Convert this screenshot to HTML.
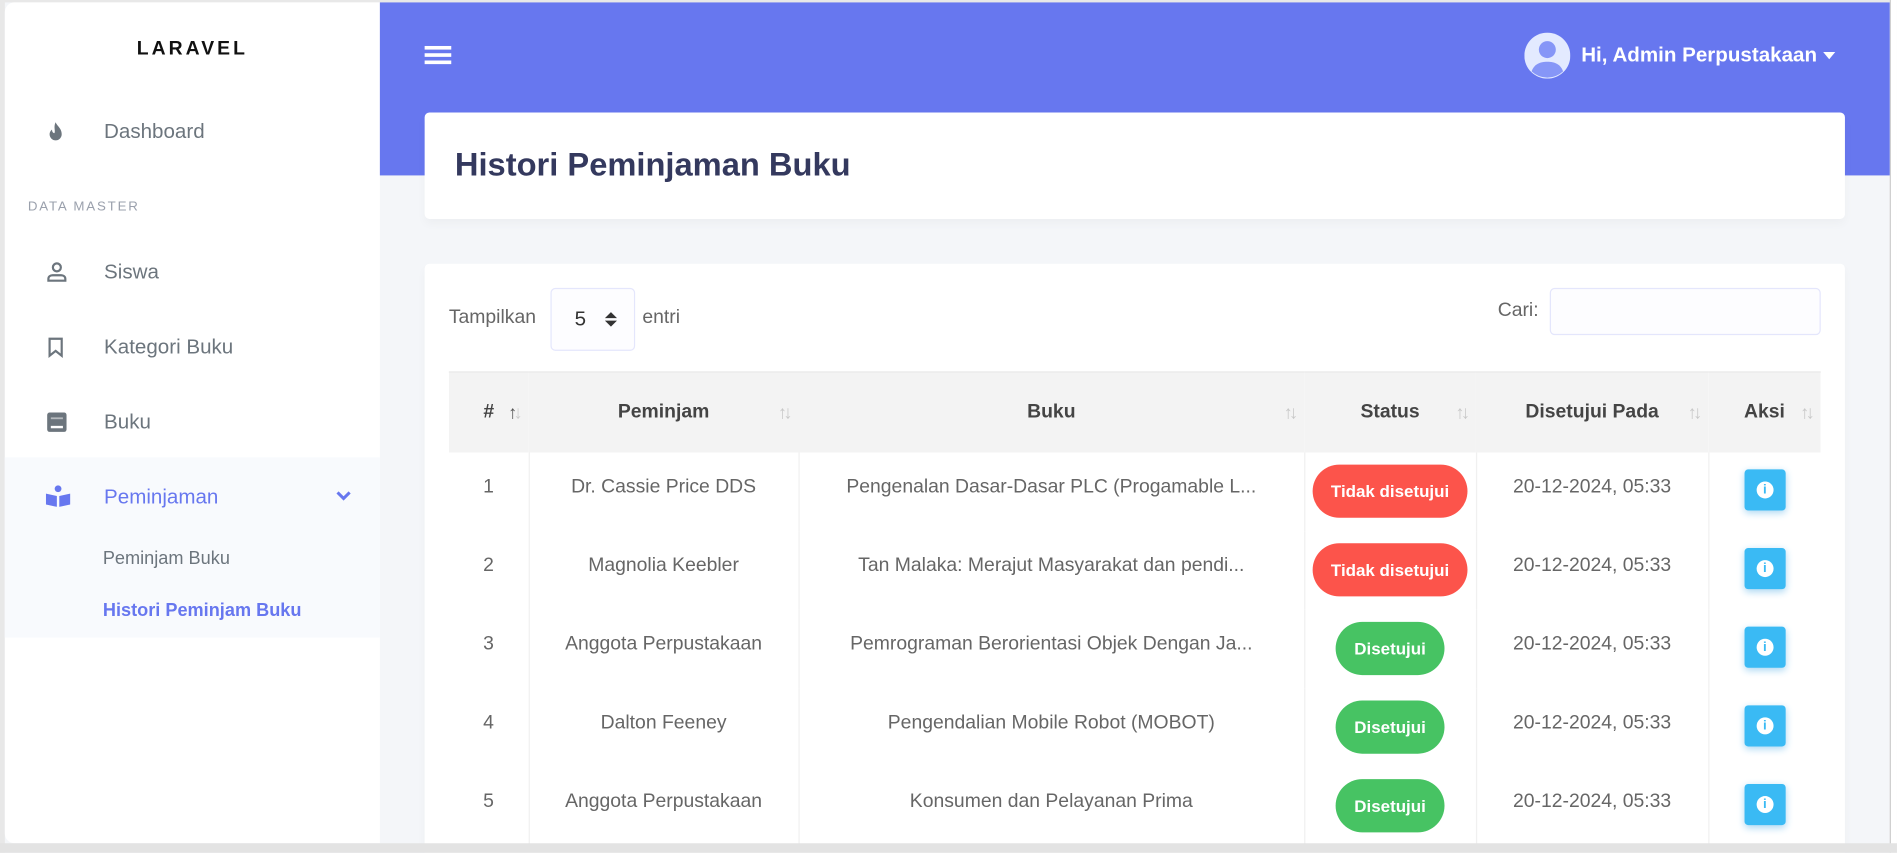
<!DOCTYPE html>
<html><head><meta charset="utf-8"><style>
*{box-sizing:border-box;margin:0;padding:0}
html,body{width:1897px;height:853px;overflow:hidden;background:#fff}
#w{position:absolute;left:0;top:0;width:1568px;height:705px;transform:scale(1.2098);transform-origin:0 0;background:#f4f6f9;font-family:"Liberation Sans",sans-serif;overflow:hidden}
.abs{position:absolute}
#sb{left:4px;top:2px;width:310px;height:695px;background:#fff;border-radius:8px 0 0 8px}
.logo{left:0;width:310px;top:30px;text-align:center;font-weight:bold;font-size:16px;letter-spacing:2.5px;color:#111}
.mi{position:absolute;left:82px;font-size:17px;color:#6c757d}
.ic{position:absolute;left:34px}
#hd{left:314px;top:2px;width:1248px;height:143px;background:#6777ef}
.card{background:#fff;border-radius:4px;box-shadow:0 4px 8px rgba(0,0,0,.03)}
table{border-collapse:collapse;table-layout:fixed;position:absolute;left:371px;top:307px;width:1134px;font-size:16px;color:#666}
th{height:66px;background:#f3f3f3;color:#444;font-weight:bold;position:relative;border-top:1px solid #e5e5e5;white-space:nowrap}
td{height:65px;text-align:center;border-left:1px solid #f0f0f0;vertical-align:middle;padding:0 4px 6px;white-space:nowrap;overflow:hidden}
td:first-child{border-left:none}
.s{position:absolute;right:8px;top:25px;color:#c8c8c8;font-size:15px;font-weight:normal;letter-spacing:-3px}
.b{display:inline-block;color:#fff;font-weight:bold;font-size:14px;height:44px;line-height:44px;border-radius:22px;padding:0 15px;position:relative;top:3px}
.r{background:#fc544b}.g{background:#47c363}
.inf{display:inline-block;width:34px;height:34px;background:#3abaf4;border-radius:3px;position:relative;top:4px;box-shadow:0 2px 6px #acd8f3}
.inf:after{content:"i";position:absolute;left:10px;top:10px;width:14px;height:14px;border-radius:50%;background:#fff;color:#3abaf4;font-size:11px;font-weight:bold;line-height:14px;text-align:center}
</style></head><body><div id="w">
<div class="abs" style="left:0;top:0;width:1568px;height:2px;background:#e8e8e8"></div>
<div class="abs" style="left:0;top:0;width:4px;height:705px;background:#e8e8e8"></div>
<div class="abs" style="left:1562px;top:0;width:6px;height:705px;background:#fff;border-left:1px solid #ccc"></div>
<div id="sb" class="abs">
 <div class="abs logo">LARAVEL</div>
 <svg class="ic" style="top:98px" width="16" height="18" viewBox="0 0 16 18"><path d="M8 1c1 3 5 5 5 10a5 5 0 0 1-10 0c0-2 1-3 2-4 0 2 1 3 2 3 1-2-1-5 1-9z" fill="#6c757d"/></svg>
 <div class="mi" style="top:97px">Dashboard</div>
 <div class="abs" style="left:19px;top:163px;font-size:11px;letter-spacing:1.5px;color:#9aa0ac">DATA MASTER</div>
 <svg class="ic" style="top:214px" width="18" height="18" viewBox="0 0 18 18" fill="none" stroke="#6c757d" stroke-width="1.8"><circle cx="9" cy="5" r="3.3"/><path d="M2 16v-1.5c0-1.8 1.5-3 3.5-3h7c2 0 3.5 1.2 3.5 3V16z"/></svg>
 <div class="mi" style="top:213px">Siswa</div>
 <svg class="ic" style="top:276px" width="16" height="18" viewBox="0 0 16 18" fill="none" stroke="#6c757d" stroke-width="1.8"><path d="M3 2h10v14l-5-4-5 4z"/></svg>
 <div class="mi" style="top:275px">Kategori Buku</div>
 <svg class="ic" style="top:338px" width="18" height="18" viewBox="0 0 18 18"><rect x="1" y="1" width="16" height="16" rx="2" fill="#6c757d"/><rect x="4" y="12" width="10" height="2" fill="#fff"/><rect x="4" y="5" width="10" height="1.5" fill="#fff" opacity=".5"/></svg>
 <div class="mi" style="top:337px">Buku</div>
 <div class="abs" style="left:0;top:376px;width:310px;height:149px;background:#f8fafd"></div>
 <svg class="ic" style="top:399px;left:33px" width="22" height="18" viewBox="0 0 22 18"><circle cx="11" cy="3" r="2.8" fill="#6777ef"/><path d="M1 7l9 2v9l-9-2zM21 7l-9 2v9l9-2z" fill="#6777ef"/></svg>
 <div class="mi" style="top:399px;color:#6777ef">Peminjaman</div>
 <svg class="abs" style="left:273px;top:403px" width="14" height="10" viewBox="0 0 14 10"><path d="M2 2l5 5 5-5" stroke="#6777ef" stroke-width="2.5" fill="none"/></svg>
 <div class="abs" style="left:81px;top:451px;font-size:15px;color:#6c757d">Peminjam Buku</div>
 <div class="abs" style="left:81px;top:494px;font-size:15px;color:#6777ef;font-weight:bold">Histori Peminjam Buku</div>
</div>
<div id="hd" class="abs"></div>
<div class="abs" style="left:351px;top:38px;width:22px;height:15px;border-top:3px solid #fff;border-bottom:3px solid #fff"><div style="margin-top:3px;height:3px;background:#fff"></div></div>
<svg class="abs" style="left:1260px;top:27px" width="38" height="38" viewBox="0 0 38 38"><circle cx="19" cy="19" r="19" fill="#e3eaff"/><circle cx="19" cy="14" r="7" fill="#8696f7"/><path d="M6 32c2-6 7-8 13-8s11 2 13 8a19 19 0 0 1-26 0z" fill="#8696f7"/></svg>
<div class="abs" style="left:1307px;top:36px;color:#fff;font-weight:bold;font-size:17px">Hi, Admin Perpustakaan</div>
<div class="abs" style="left:1507px;top:43px;border:5px solid transparent;border-top:6px solid #fff"></div>
<div class="abs card" style="left:351px;top:93px;width:1174px;height:88px"></div>
<div class="abs" style="left:376px;top:121px;font-size:27px;font-weight:bold;color:#34395e">Histori Peminjaman Buku</div>
<div class="abs card" style="left:351px;top:218px;width:1174px;height:500px"></div>
<div class="abs" style="left:371px;top:254px;font-size:16px;color:#666">Tampilkan</div>
<div class="abs" style="left:455px;top:238px;width:70px;height:52px;border:1px solid #e4e6fc;border-radius:4px;background:#fdfdff"></div>
<div class="abs" style="left:475px;top:254px;font-size:17px;color:#333">5</div>
<svg class="abs" style="left:499px;top:257px" width="12" height="14" viewBox="0 0 12 14"><path d="M6 1l5 5H1zM6 13l5-5H1z" fill="#333"/></svg>
<div class="abs" style="left:531px;top:254px;font-size:16px;color:#666">entri</div>
<div class="abs" style="left:1238px;top:248px;font-size:16px;color:#666">Cari:</div>
<div class="abs" style="left:1281px;top:238px;width:224px;height:39px;border:1px solid #e4e6fc;border-radius:4px;background:#fdfdff"></div>
<table>
<colgroup><col style="width:66px"><col style="width:223px"><col style="width:418px"><col style="width:142px"><col style="width:192px"><col style="width:93px"></colgroup>
<tr><th>#<span class="s" style="color:#555">↑<span style="color:#ccc">↓</span></span></th><th>Peminjam<span class="s">↑↓</span></th><th>Buku<span class="s">↑↓</span></th><th>Status<span class="s">↑↓</span></th><th>Disetujui Pada<span class="s">↑↓</span></th><th>Aksi<span class="s">↑↓</span></th></tr>
<tr><td>1</td><td>Dr. Cassie Price DDS</td><td>Pengenalan Dasar-Dasar PLC (Progamable L...</td><td><span class="b r">Tidak disetujui</span></td><td>20-12-2024, 05:33</td><td><span class="inf"></span></td></tr>
<tr><td>2</td><td>Magnolia Keebler</td><td>Tan Malaka: Merajut Masyarakat dan pendi...</td><td><span class="b r">Tidak disetujui</span></td><td>20-12-2024, 05:33</td><td><span class="inf"></span></td></tr>
<tr><td>3</td><td>Anggota Perpustakaan</td><td>Pemrograman Berorientasi Objek Dengan Ja...</td><td><span class="b g">Disetujui</span></td><td>20-12-2024, 05:33</td><td><span class="inf"></span></td></tr>
<tr><td>4</td><td>Dalton Feeney</td><td>Pengendalian Mobile Robot (MOBOT)</td><td><span class="b g">Disetujui</span></td><td>20-12-2024, 05:33</td><td><span class="inf"></span></td></tr>
<tr><td>5</td><td>Anggota Perpustakaan</td><td>Konsumen dan Pelayanan Prima</td><td><span class="b g">Disetujui</span></td><td>20-12-2024, 05:33</td><td><span class="inf"></span></td></tr>
</table>
<div class="abs" style="left:0;top:697px;width:1568px;height:8px;background:#e3e3e3"></div>
</div></body></html>
